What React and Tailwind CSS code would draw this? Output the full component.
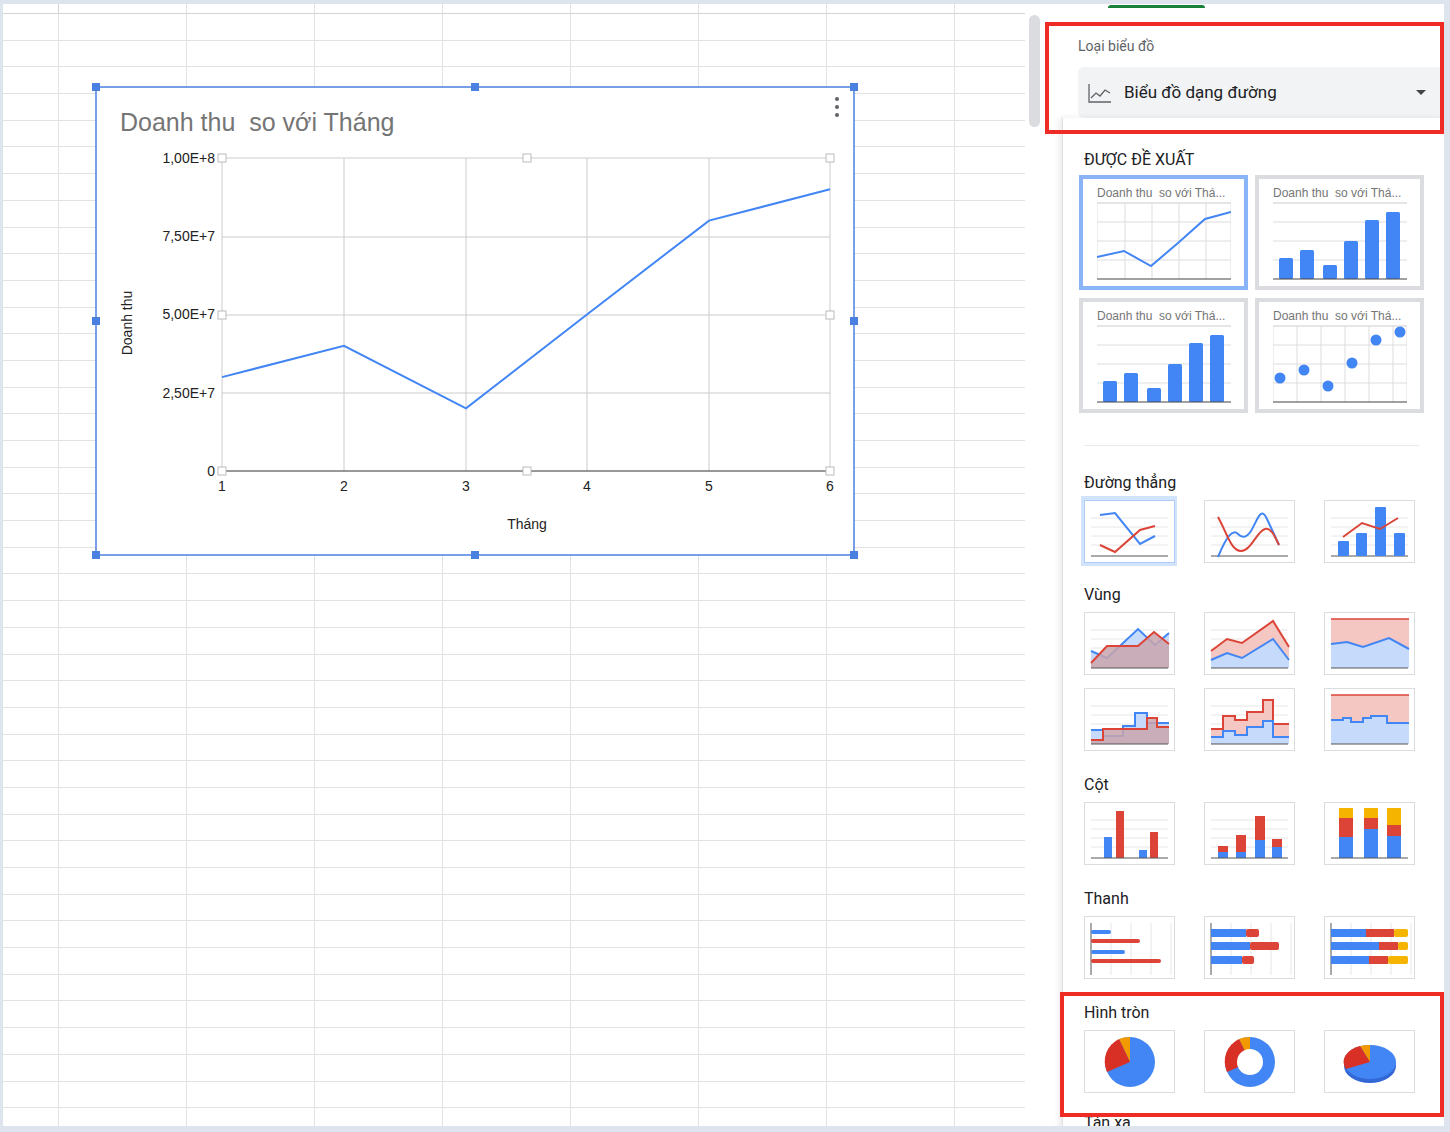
import React from "react";

const B = "#4285f4", R = "#db4437", Y = "#f4b400";

function GridLines({ w, h, n = 4 }) {
  const els = [];
  for (let i = 1; i <= n; i++) {
    const y = 8 + ((h - 16) * i) / (n + 1);
    els.push(<line key={i} x1="6" x2={w - 6} y1={y} y2={y} stroke="#e6e6e6" strokeWidth="1" />);
  }
  return els;
}

function Thumb({ children, sel }) {
  return (
    <div className={sel ? "w-[96px] h-[70px] -m-[3px] bg-[#d2e3fc] p-[3px] flex items-center justify-center" : "w-[90px] h-[64px] flex items-center justify-center"}>
      <div className={"w-[91px] h-[63px] bg-white border " + (sel ? "border-[#aecbfa]" : "border-[#dadce0]")}>
        <svg width="89" height="61" viewBox="0 0 89 61">{children}</svg>
      </div>
    </div>
  );
}
const Axis = () => <line x1="6" x2="83" y1="55" y2="55" stroke="#555" strokeWidth="1" />;

function Sec({ title, children, mt }) {
  return (
    <div className={mt}>
      <div className="text-[16px] text-[#202124] leading-[20px] mb-[6px]">{title}</div>
      <div className="grid grid-cols-[90px_90px_90px] gap-x-[30px] gap-y-[12px]">{children}</div>
    </div>
  );
}

function RecCard({ sel, children }) {
  return (
    <div className={"w-[169px] h-[115px] border-[4px] bg-white px-[14px] pt-[6px] " + (sel ? "border-[#8ab4f8]" : "border-[#dadce0]")}>
      <div className="text-[12px] text-[#757575] leading-[16px] whitespace-nowrap" style={{ fontFamily: "Arial, 'Liberation Sans', sans-serif" }}>Doanh thu&nbsp; so với Thá...</div>
      <svg width="134" height="80" viewBox="0 0 134 80" className="mt-[1px]">
        <line x1="0" x2="134" y1="1" y2="1" stroke="#ccc" />
        {children}
        <line x1="0" x2="134" y1="77" y2="77" stroke="#444" strokeWidth="1.2" />
      </svg>
    </div>
  );
}
const hl = [20, 39, 58].map((y) => <line key={y} x1="0" x2="134" y1={y} y2={y} stroke="#ddd" />);
const bars = [[6, 56], [27, 48], [50, 63], [71, 39], [92, 18], [113, 10]];

export default function App() {
  const rows = Array.from({ length: 42 });
  const cols = Array.from({ length: 8 });
  const px = [222, 344, 466, 587, 709, 830];
  const vals = [3, 4, 2, 5, 8, 9];
  const py = (v) => 471 - (v / 10) * 313;
  const pts = vals.map((v, i) => `${px[i]},${py(v)}`).join(" ");
  const handles = [[96, 87], [475, 87], [854, 87], [96, 321], [854, 321], [96, 555], [475, 555], [854, 555]];
  const sh = [[222, 158], [527, 158], [830, 158], [222, 315], [830, 315], [222, 471], [527, 471], [830, 471]];
  return (
    <div className="w-[1450px] h-[1132px] bg-[#dde4ee] pt-[4px] pl-[3px] pr-[6px] pb-[6px] overflow-hidden" style={{ fontFamily: "Roboto, 'Liberation Sans', sans-serif" }}>
      <div className="relative w-full h-full bg-white flex overflow-hidden">
        {/* sheet */}
        <div className="relative w-[1022px] shrink-0 h-full overflow-hidden">
          <div className="h-[10px] border-b border-[#d4d4d4] flex">
            <div className="w-[56px] shrink-0 border-r border-[#d4d4d4]" />
            {cols.map((_, j) => <div key={j} className="w-[128px] shrink-0 border-r border-[#e2e2e2]" />)}
          </div>
          {rows.map((_, i) => (
            <div key={i} className="h-[26.7px] border-b border-[#e2e2e2] flex">
              <div className="w-[56px] shrink-0 border-r border-[#e2e2e2]" />
              {cols.map((_, j) => <div key={j} className="w-[128px] shrink-0 border-r border-[#e2e2e2]" />)}
            </div>
          ))}
        </div>
        {/* chart overlay */}
        <svg className="absolute left-[-3px] top-[-4px]" width="870" height="570" viewBox="0 0 870 570" style={{ fontFamily: "Arial, 'Liberation Sans', sans-serif" }}>
          <rect x="96" y="87" width="758" height="468" fill="white" stroke="#4a80e0" strokeWidth="1.5" />
          <text x="120" y="131" fontSize="25" fill="#757575">Doanh thu&#160; so với Tháng</text>
          <circle cx="837" cy="99" r="2" fill="#5f6368" /><circle cx="837" cy="107" r="2" fill="#5f6368" /><circle cx="837" cy="115" r="2" fill="#5f6368" />
          {[158, 237, 315, 393].map((y) => <line key={y} x1="222" x2="830" y1={y} y2={y} stroke="#ccc" />)}
          {px.map((x) => <line key={x} x1={x} x2={x} y1="158" y2="471" stroke="#ccc" />)}
          <line x1="222" x2="830" y1="471" y2="471" stroke="#333" />
          {["1,00E+8", "7,50E+7", "5,00E+7", "2,50E+7", "0"].map((t, i) => (
            <text key={t} x="215" y={163 + i * 78.2} fontSize="14" textAnchor="end" fill="#222">{t}</text>
          ))}
          {px.map((x, i) => <text key={x} x={x} y="491" fontSize="14" textAnchor="middle" fill="#222">{i + 1}</text>)}
          <text x="527" y="529" fontSize="14" textAnchor="middle" fill="#222">Tháng</text>
          <text transform="translate(132 323) rotate(-90)" fontSize="14" textAnchor="middle" fill="#222">Doanh thu</text>
          <polyline points={pts} fill="none" stroke="#4285f4" strokeWidth="2" />
          {sh.map(([x, y], i) => <rect key={i} x={x - 4} y={y - 4} width="8" height="8" fill="white" stroke="#bbb" />)}
          {handles.map(([x, y], i) => <rect key={i} x={x - 4} y={y - 4} width="8" height="8" fill="#4a80e0" />)}
        </svg>
        {/* scrollbar */}
        <div className="w-[18px] shrink-0 h-full flex justify-center pt-[11px]">
          <div className="w-[11px] h-[112px] bg-[#dadce0] rounded-full" />
        </div>
        {/* panel */}
        <div className="relative flex-1 flex flex-col">
          <div className="absolute left-[65px] top-[1px] w-[97px] h-[3px] bg-[#188038] rounded-t" />
          <div className="h-[118px] pl-[35px] pt-[33px]">
            <div className="text-[14px] text-[#5f6368] leading-[18px]">Loại biểu đồ</div>
            <div className="mt-[12px] h-[51px] bg-[#f1f3f4] rounded-l-[6px] flex items-center pl-[10px] pr-[18px]">
              <svg width="24" height="20" viewBox="0 0 24 20" fill="none" stroke="#5f6368" strokeWidth="1.3">
                <path d="M1 1v18h22" /><path d="M3 15l5-5 4 3 5-6 5 3" />
              </svg>
              <span className="ml-[12px] text-[17px] text-[#202124]">Biểu đồ dạng đường</span>
              <span className="ml-auto w-0 h-0 border-l-[5px] border-r-[5px] border-t-[5px] border-l-transparent border-r-transparent border-t-[#444]" />
            </div>
          </div>
          <div className="ml-[19px] flex-1 border-l border-[#e0e0e0] shadow-[-3px_0_6px_rgba(0,0,0,0.08)] pl-[21px] pr-[20px] pt-[32px]">
            <div className="text-[16px] text-[#202124] leading-[20px] mb-[5px]">ĐƯỢC ĐỀ XUẤT</div>
            <div className="grid grid-cols-[169px_169px] gap-x-[7px] gap-y-[8px] -ml-[5px]">
              <RecCard sel>
                {[28, 55, 82, 109].map((x) => <line key={x} x1={x} x2={x} y1="1" y2="77" stroke="#ddd" />)}
                {hl}
                <line x1="0" x2="0" y1="1" y2="77" stroke="#ddd" /><line x1="134" x2="134" y1="1" y2="77" stroke="#ddd" />
                <polyline points="0,55 27,49 54,64 81,41 108,17 134,10" fill="none" stroke={B} strokeWidth="2" />
              </RecCard>
              <RecCard>{hl}{bars.map(([x, y]) => <rect key={x} x={x} y={y} width="14" height={77 - y} rx="1.5" fill={B} />)}</RecCard>
              <RecCard>{hl}{bars.map(([x, y]) => <rect key={x} x={x} y={y} width="14" height={77 - y} rx="1.5" fill={B} />)}</RecCard>
              <RecCard>
                {[0, 24, 48, 72, 96, 120, 134].map((x) => <line key={x} x1={x} x2={x} y1="1" y2="77" stroke="#ddd" />)}
                {hl}
                {[[7, 53], [31, 45], [55, 61], [79, 38], [103, 15], [127, 7]].map(([x, y]) => <circle key={x} cx={x} cy={y} r="5.5" fill={B} />)}
              </RecCard>
            </div>
            <div className="mt-[32px] h-px bg-[#e8eaed] w-[335px]" />
            <Sec title="Đường thẳng" mt="mt-[27px]">
              <Thumb sel><GridLines w={89} h={61} /><Axis /><polyline points="15,14 30,12 55,43 70,35" fill="none" stroke={B} strokeWidth="2" /><polyline points="15,44 30,51 55,29 70,25" fill="none" stroke={R} strokeWidth="2" /></Thumb>
              <Thumb><GridLines w={89} h={61} /><Axis /><path d="M13,56 C22,34 28,28 33,33 C38,38 42,36 46,30 C52,20 56,4 62,18 L74,44" fill="none" stroke={B} strokeWidth="2" /><path d="M13,16 C22,32 26,50 36,50 C46,50 52,30 60,28 C66,26 70,36 74,44" fill="none" stroke={R} strokeWidth="2" /></Thumb>
              <Thumb><GridLines w={89} h={61} /><Axis />{[[13, 40], [31, 32], [50, 6], [69, 32]].map(([x, y]) => <rect key={x} x={x} y={y} width="11" height={55 - y} rx="1" fill={B} />)}<polyline points="18,36 37,22 55,28 73,17" fill="none" stroke={R} strokeWidth="2" /></Thumb>
            </Sec>
            <Sec title="Vùng" mt="mt-[22px]">
              <Thumb><GridLines w={89} h={61} /><polygon points="6,38 22,45 53,16 70,32 84,20 84,55 6,55" fill="#c6dafc" /><polyline points="6,38 22,45 53,16 70,32 84,20" fill="none" stroke={B} strokeWidth="2" /><polygon points="6,50 22,33 53,33 69,19 84,31 84,55 6,55" fill="#c9a4ac" opacity="0.85" /><polyline points="6,50 22,33 53,33 69,19 84,31" fill="none" stroke={R} strokeWidth="2" /><Axis /></Thumb>
              <Thumb><GridLines w={89} h={61} /><polygon points="6,38 22,26 37,30 68,8 84,34 84,55 6,55" fill="#f4c7c3" /><polyline points="6,38 22,26 37,30 68,8 84,34" fill="none" stroke={R} strokeWidth="2" /><polygon points="6,47 22,40 37,45 68,26 84,47 84,55 6,55" fill="#c6dafc" /><polyline points="6,47 22,40 37,45 68,26 84,47" fill="none" stroke={B} strokeWidth="2" /><Axis /></Thumb>
              <Thumb><rect x="6" y="6" width="78" height="49" fill="#f4c7c3" /><line x1="6" x2="84" y1="6" y2="6" stroke={R} strokeWidth="1.5" /><polygon points="6,31 22,29 38,34 64,25 84,36 84,55 6,55" fill="#c6dafc" /><polyline points="6,31 22,29 38,34 64,25 84,36" fill="none" stroke={B} strokeWidth="2" /><Axis /></Thumb>
              <Thumb><GridLines w={89} h={61} /><polygon points="6,41 18,41 18,47 38,47 38,37 50,37 50,24 62,24 62,34 84,34 84,55 6,55" fill="#c6dafc" /><polyline points="6,41 18,41 18,47 38,47 38,37 50,37 50,24 62,24 62,34 84,34" fill="none" stroke={B} strokeWidth="2" /><polygon points="6,51 18,51 18,40 62,40 62,29 72,29 72,38 84,38 84,55 6,55" fill="#c9a4ac" opacity="0.85" /><polyline points="6,51 18,51 18,40 62,40 62,29 72,29 72,38 84,38" fill="none" stroke={R} strokeWidth="2" /><Axis /></Thumb>
              <Thumb><GridLines w={89} h={61} /><polygon points="6,40 18,40 18,27 30,27 30,31 42,31 42,23 58,23 58,11 68,11 68,35 84,35 84,55 6,55" fill="#f4c7c3" /><polyline points="6,40 18,40 18,27 30,27 30,31 42,31 42,23 58,23 58,11 68,11 68,35 84,35" fill="none" stroke={R} strokeWidth="2" /><polygon points="6,48 18,48 18,42 30,42 30,46 42,46 42,38 58,38 58,32 68,32 68,48 84,48 84,55 6,55" fill="#c6dafc" /><polyline points="6,48 18,48 18,42 30,42 30,46 42,46 42,38 58,38 58,32 68,32 68,48 84,48" fill="none" stroke={B} strokeWidth="2" /><Axis /></Thumb>
              <Thumb><rect x="6" y="6" width="78" height="49" fill="#f4c7c3" /><line x1="6" x2="84" y1="6" y2="6" stroke={R} strokeWidth="1.5" /><polygon points="6,31 18,31 18,29 26,29 26,33 38,33 38,29 46,29 46,27 62,27 62,34 84,34 84,55 6,55" fill="#c6dafc" /><polyline points="6,31 18,31 18,29 26,29 26,33 38,33 38,29 46,29 46,27 62,27 62,34 84,34" fill="none" stroke={B} strokeWidth="2" /><Axis /></Thumb>
            </Sec>
            <Sec title="Cột" mt="mt-[24px]">
              <Thumb><GridLines w={89} h={61} /><rect x="19" y="34" width="8" height="21" fill={B} /><rect x="31" y="8" width="8" height="47" fill={R} /><rect x="54" y="47" width="8" height="8" fill={B} /><rect x="65" y="29" width="8" height="26" fill={R} /><Axis /></Thumb>
              <Thumb><GridLines w={89} h={61} />{[[13, 49, 43], [31, 49, 32], [50, 37, 13], [67, 44, 36]].map(([x, b, r]) => <g key={x}><rect x={x} y={r} width="10" height={b - r} fill={R} /><rect x={x} y={b} width="10" height={55 - b} fill={B} /></g>)}<Axis /></Thumb>
              <Thumb>{[[14, 34, 15, 5], [39, 26, 15, 5], [62, 33, 22, 5]].map(([x, b, r, y]) => <g key={x}><rect x={x} y={y} width="14" height={r - y} fill={Y} /><rect x={x} y={r} width="14" height={b - r} fill={R} /><rect x={x} y={b} width="14" height={55 - b} fill={B} /></g>)}<Axis /></Thumb>
            </Sec>
            <Sec title="Thanh" mt="mt-[24px]">
              <Thumb>{[26, 46, 66, 86].map((x) => <line key={x} x1={x} x2={x} y1="6" y2="58" stroke="#e6e6e6" />)}<line x1="6" x2="6" y1="6" y2="58" stroke="#555" /><rect x="6" y="13" width="20" height="4" rx="2" fill={B} /><rect x="6" y="22" width="49" height="4" rx="2" fill={R} /><rect x="6" y="33" width="34" height="4" rx="2" fill={B} /><rect x="6" y="42" width="70" height="4" rx="2" fill={R} /></Thumb>
              <Thumb>{[26, 46, 66, 86].map((x) => <line key={x} x1={x} x2={x} y1="6" y2="58" stroke="#e6e6e6" />)}<line x1="6" x2="6" y1="6" y2="58" stroke="#555" />{[[12, 41, 54], [25, 45, 74], [39, 37, 49]].map(([y, b, r]) => <g key={y}><rect x={b} y={y} width={r - b} height="8" rx="2" fill={R} /><rect x="6" y={y} width={b - 6} height="8" fill={B} /></g>)}</Thumb>
              <Thumb>{[26, 46, 66, 86].map((x) => <line key={x} x1={x} x2={x} y1="6" y2="58" stroke="#e6e6e6" />)}<line x1="6" x2="6" y1="6" y2="58" stroke="#555" />{[[12, 41, 69], [25, 54, 73], [39, 44, 63]].map(([y, b, r]) => <g key={y}><rect x={r} y={y} width={83 - r} height="8" rx="2" fill={Y} /><rect x={b} y={y} width={r - b} height="8" fill={R} /><rect x="6" y={y} width={b - 6} height="8" fill={B} /></g>)}</Thumb>
            </Sec>
            <Sec title="Hình tròn" mt="mt-[24px]">
              <Thumb>
                <circle cx="45" cy="31" r="25" fill={B} />
                <path d="M45,31 L45,6 A25,25 0 0,0 34,8 Z" fill="#f29900" />
                <path d="M45,31 L34,8 A25,25 0 0,0 22,41 Z" fill="#d93025" />
              </Thumb>
              <Thumb>
                <circle cx="45" cy="31" r="25" fill={B} />
                <path d="M45,31 L45,6 A25,25 0 0,0 34,8 Z" fill="#f29900" />
                <path d="M45,31 L34,8 A25,25 0 0,0 22,41 Z" fill="#d93025" />
                <circle cx="45" cy="31" r="13" fill="white" />
              </Thumb>
              <Thumb>
                <ellipse cx="45" cy="35" rx="26" ry="17" fill="#3367d6" />
                <ellipse cx="45" cy="31" rx="26" ry="17" fill={B} />
                <path d="M45,31 L45,14 A26,17 0 0,0 35,15 Z" fill="#f29900" />
                <path d="M45,31 L35,15 A26,17 0 0,0 21,38 Z" fill="#d93025" />
              </Thumb>
            </Sec>
            <div className="mt-[20px] text-[16px] leading-[20px] text-[#202124]">Tán xạ</div>
          </div>
          {/* red highlight boxes */}
          <div className="absolute left-[2px] top-[18px] w-[399px] h-[112px] border-[4px] border-[#ee2b24]" />
          <div className="absolute left-[17px] top-[988px] w-[384px] h-[125px] border-[4px] border-[#ee2b24]" />
        </div>
      </div>
    </div>
  );
}
